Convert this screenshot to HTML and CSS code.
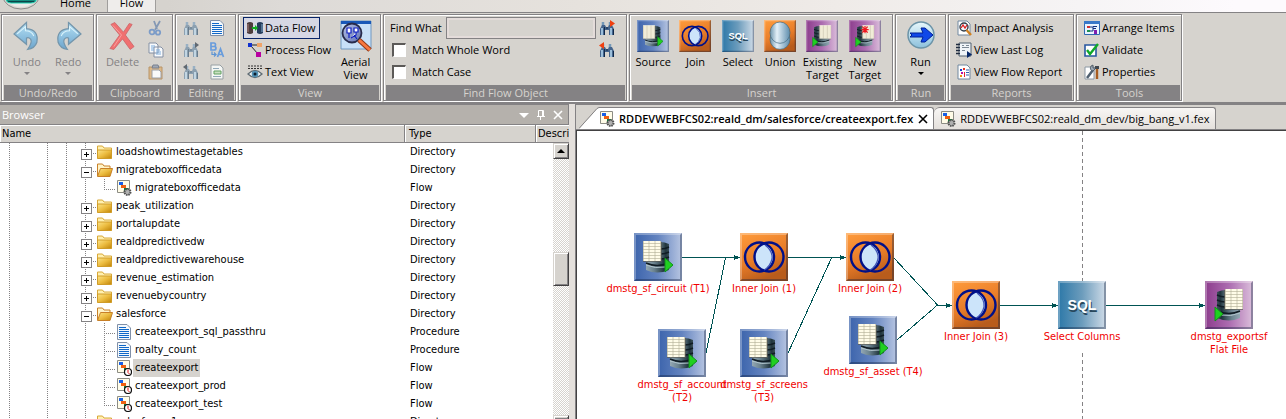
FILE: index.html
```html
<!DOCTYPE html>
<html lang="en">
<head>
<meta charset="utf-8">
<title>Data Management Console</title>
<link rel="stylesheet" href="styles.css">
</head>
<body>
<svg class="defs" aria-hidden="true">
  <defs>
    <linearGradient id="gBlue" x1="0" x2="1"><stop offset="0" stop-color="#3c64ac"/><stop offset=".5" stop-color="#6484c0"/><stop offset="1" stop-color="#b8c6e2"/></linearGradient>
    <linearGradient id="gOrange" x1="0" y1="0" x2=".4" y2="1"><stop offset="0" stop-color="#ff9c3c"/><stop offset=".6" stop-color="#e87c28"/><stop offset="1" stop-color="#b85c1c"/></linearGradient>
    <linearGradient id="gTeal" x1="0" x2="1"><stop offset="0" stop-color="#2c78a8"/><stop offset=".5" stop-color="#6c9cbc"/><stop offset="1" stop-color="#d0dce8"/></linearGradient>
    <linearGradient id="gPurple" x1="0" x2="1"><stop offset="0" stop-color="#8c3c8c"/><stop offset=".5" stop-color="#ac6cb0"/><stop offset="1" stop-color="#dcc0dc"/></linearGradient>
    <linearGradient id="gCyl" x1="0" x2="1"><stop offset="0" stop-color="#94a8b4"/><stop offset=".35" stop-color="#6c8490"/><stop offset=".8" stop-color="#20343c"/><stop offset="1" stop-color="#3c5058"/></linearGradient>
    <linearGradient id="gSilver" x1="0" x2="1"><stop offset="0" stop-color="#6c94ac"/><stop offset=".35" stop-color="#e4f0f8"/><stop offset="1" stop-color="#5c8cac"/></linearGradient>
    <linearGradient id="gArrow" x1="0" y1="0" x2="0" y2="1"><stop offset="0" stop-color="#b4e0f4"/><stop offset="1" stop-color="#6ca4cc"/></linearGradient>
    <linearGradient id="gFolder" x1="0" y1="0" x2="1" y2="1"><stop offset="0" stop-color="#fce488"/><stop offset=".5" stop-color="#ecbc40"/><stop offset="1" stop-color="#c08408"/></linearGradient>
    <linearGradient id="gRun" x1="0" y1="0" x2="0" y2="1"><stop offset="0" stop-color="#e8f8fc"/><stop offset="1" stop-color="#8cc0dc"/></linearGradient>
    <linearGradient id="gLens" x1="0" y1="0" x2="1" y2="1"><stop offset="0" stop-color="#b8c4e8"/><stop offset="1" stop-color="#6070b0"/></linearGradient>
  </defs>
  <symbol id="bevel" viewBox="0 0 48 48"><path d="M0 0H48L46 2H2V46L0 48Z" fill="#fff" opacity=".3"/><path d="M48 0V48H0L2 46H46V2Z" fill="#102040" opacity=".38"/></symbol>
  <symbol id="db" viewBox="0 0 32 34">
    <path d="M10 4Q17 0 26 4V23H10Z" fill="url(#gCyl)"/><path d="M3 18H26V30Q14 35 3 30Z" fill="url(#gCyl)"/>
    <path d="M3 23Q14 28 26 23M18 9Q22 9 26 7M18 14Q22 14 26 12M18 19Q22 19 26 17" fill="none" stroke="#101c24" stroke-width="1.4"/><path d="M3 25Q12 29 22 27" fill="none" stroke="#b0c4cc"/>
    <path d="M0 1H18V21H0Z" fill="#fffce8"/><path d="M0 3.5H18M0 6.5H18M0 9.5H18M0 12.5H18M0 15.5H18M0 18.5H18M.5 1V21M6 1V21M12 1V21M17.5 1V21" stroke="#b0ac94" stroke-width=".6"/><path d="M0 21.5H18.5V2" fill="none" stroke="#5c5c54" stroke-width=".7"/>
  </symbol>
  <symbol id="source" viewBox="0 0 48 48"><path d="M0 0H48V48H0Z" fill="url(#gBlue)"/><use href="#bevel"/><use href="#db" x="9" y="7" width="32" height="34"/><path d="M31 25L39 32L31 39Z" fill="#20d020" stroke="#10901c" stroke-width="1"/></symbol>
  <symbol id="join" viewBox="0 0 48 48"><path d="M0 0H48V48H0Z" fill="url(#gOrange)"/><use href="#bevel"/><ellipse cx="24" cy="24" rx="10" ry="13" fill="#cce4fa"/><g fill="none" stroke="#001088" stroke-width="2.4"><ellipse cx="19.5" cy="24" rx="14.5" ry="14.500"/><ellipse cx="29" cy="24" rx="14.500" ry="14.500"/></g><path d="M25 12Q33 18 32 26Q30 34 24 37" fill="none" stroke="#4054b4" stroke-width="1.2"/></symbol>
  <symbol id="sql" viewBox="0 0 48 48"><path d="M0 0H48V48H0Z" fill="url(#gTeal)"/><use href="#bevel"/><text x="25" y="31" class="sql-text sql-shade">SQL</text><text x="24" y="29" class="sql-text">SQL</text></symbol>
  <symbol id="union" viewBox="0 0 48 48"><path d="M0 0H48V48H0Z" fill="url(#gOrange)"/><use href="#bevel"/><ellipse cx="24" cy="29" rx="15" ry="15" fill="url(#gSilver)" stroke="#406880"/><ellipse cx="24" cy="19" rx="15" ry="16" fill="url(#gSilver)" stroke="#406880"/></symbol>
  <symbol id="target" viewBox="0 0 48 48"><path d="M0 0H48V48H0Z" fill="url(#gPurple)"/><use href="#bevel"/><g transform="matrix(-1 0 0 1 38 7)"><use href="#db" width="32" height="34" x="0" y="0"/></g><path d="M10 26L18 33L10 40Z" fill="#20d020" stroke="#10901c"/></symbol>
  <symbol id="newtarget" viewBox="0 0 48 48"><use href="#target" width="48" height="48"/><path d="M24 9V20M18.500 14.500H29.500M20 10L28 19M28 10L20 19" stroke="#f01820" stroke-width="1.8"/></symbol>
  <symbol id="undo" viewBox="0 0 26 28"><path d="M1 12L13 1V7Q25 8 23 20Q21 26 14 27Q19 20 17 17Q15 15 13 16V22Z" fill="url(#gArrow)" stroke="#7496ac" stroke-width="1.2"/><path d="M4 12L12 5V9Q18 9 20 14" fill="none" stroke="#dcf4fc"/></symbol>
  <symbol id="redo" viewBox="0 0 26 28"><g transform="matrix(-1 0 0 1 26 0)"><use href="#undo" width="26" height="28"/></g></symbol>
  <symbol id="delete" viewBox="0 0 28 30"><path d="M2 3L6 1L15 11L21 2L24 3L17 14L26 26L22 29L14 18L5 29L1 28L11 14Z" fill="#f07070" stroke="#c86468" stroke-width=".8"/><path d="M4 4L13 14L5 26" fill="none" stroke="#f8a0a0"/></symbol>
  <symbol id="cut" viewBox="0 0 16 16"><path d="M6 1L9 9M12 1L7 10" stroke="#8498b4" stroke-width="1.8"/><g fill="none" stroke="#7c9cc8" stroke-width="1.8"><circle cx="4" cy="12" r="2.400"/><circle cx="10" cy="12.500" r="2.200"/></g></symbol>
  <symbol id="copy" viewBox="0 0 16 16"><path d="M1 1H8L10 3V11H1ZM6 5H13L15 7V15H6Z" fill="#f8fafc" stroke="#8490a4"/><path d="M3 4H7M3 6H6M3 8H6M8 8H12M8 10H13M8 12H13" stroke="#7cacdc"/></symbol>
  <symbol id="paste" viewBox="0 0 16 16"><path d="M1 3H14V15H1Z" fill="#dcb888" stroke="#b89468"/><path d="M4 4L5 1H10L11 4Z" fill="#a0a8b4" stroke="#788090"/><path d="M4 6H11L13 8V14H4Z" fill="#fafafa" stroke="#9ca0a8"/></symbol>
  <symbol id="bino" viewBox="0 0 16 16"><path d="M4 2V6M11 2V6" stroke="#98b0c4" stroke-width="2.500"/><path d="M3 5H6L7 7H9L10 5H13L15 9V15H10V10H6V15H1V9Z" fill="#8ca0b0"/><path d="M3 8V15M12 8V15" stroke="#d4e8f4" stroke-width="1.500"/><path d="M5.500 7V15M14.500 9V15M7 8H9" stroke="#687c8c"/></symbol>
  <symbol id="bino-dark" viewBox="0 0 16 16"><path d="M4 2V6M11 2V6" stroke="#7498b8" stroke-width="2.500"/><path d="M3 5H6L7 7H9L10 5H13L15 9V15H10V10H6V15H1V9Z" fill="#44648c"/><path d="M3 8V15M12 8V15" stroke="#b8dcf4" stroke-width="1.500"/><path d="M5.500 7V15M14.500 9V15M7 8H9" stroke="#102848"/></symbol>
  <symbol id="bino-next" viewBox="0 0 16 16"><use href="#bino" width="16" height="16"/><path d="M12 0L16 3L12 6Z" fill="#606870"/></symbol>
  <symbol id="bino-prev" viewBox="0 0 16 16"><use href="#bino" width="16" height="16"/><path d="M4 0L0 3L4 6Z" fill="#606870"/></symbol>
  <symbol id="find-next" viewBox="0 0 16 16"><use href="#bino-dark" width="16" height="16"/><path d="M11 0L16 3.500L11 7Z" fill="#f04010"/></symbol>
  <symbol id="find-prev" viewBox="0 0 16 16"><use href="#bino-dark" width="16" height="16"/><path d="M5 0L0 3.500L5 7Z" fill="#f04010"/></symbol>
  <symbol id="doc" viewBox="0 0 16 16"><path d="M1.500 .5H11L14.500 4V15.500H1.500Z" fill="#f4f8fc" stroke="#8090a8"/><path d="M3 3.500H10M3 5.500H13M3 7.500H13M3 9.500H13M3 11.500H13M3 13.500H13" stroke="#1068c8"/></symbol>
  <symbol id="replace" viewBox="0 0 16 16"><path d="M2 1V8H5Q7 8 7 6Q7 4.500 5 4.500H2H5Q6.500 4.500 6.500 3Q6.500 1 5 1ZM8.500 15L11.500 7L14.500 15M9.500 12.500H13.500" fill="none" stroke="#689cdc" stroke-width="1.700"/><path d="M3 9.500V12.500H7M5 10.500L7 12.500L5 14.500" fill="none" stroke="#5c94d4" stroke-width="1.200"/></symbol>
  <symbol id="comment" viewBox="0 0 16 16"><path d="M2 1H11L14 4V15H2Z" fill="#f4f6f4" stroke="#98a0a4"/><path d="M4 4.500H10M4 12.500H12" stroke="#90a8b8"/><path d="M5 7H12V10H5Z" fill="#c8e0c0" stroke="#60a060"/></symbol>
  <symbol id="dataflow" viewBox="0 0 16 16"><path d="M0 3Q3 1 6 3V13Q3 15 0 13Z" fill="#4c3c3c"/><path d="M1 4V12" stroke="#a87c7c"/><path d="M10 3Q13 1 16 3V13Q13 15 10 13Z" fill="#243c5c"/><path d="M15 4V12" stroke="#84acd0"/><path d="M5 8H9" stroke="#10b020" stroke-width="2"/><path d="M8 5L11 8L8 11Z" fill="#10b020"/></symbol>
  <symbol id="processflow" viewBox="0 0 16 16"><path d="M4 3H11M4 4L11 12" stroke="#202020"/><path d="M1 1H5V5H1Z" fill="#1030d0"/><path d="M10 1H15V5H10Z" fill="#f0a468"/><path d="M9 10H14V15H9Z" fill="#b800a0"/></symbol>
  <symbol id="textview" viewBox="0 0 16 16"><path d="M1 2H15M1 4.500H15" stroke="#303030" stroke-dasharray="2 1"/><path d="M1 10Q8 3 15 10Q8 17 1 10Z" fill="#f4f8fa" stroke="#606c74" stroke-width="1.300"/><circle cx="8" cy="10" r="3.300" fill="#5090b4"/><circle cx="8" cy="10" r="1.500" fill="#0c1c2c"/></symbol>
  <symbol id="aerial" viewBox="0 0 32 32"><path d="M1 1H31V29H1Z" fill="#c8e0f8" stroke="#7098c0"/><path d="M1 1H31V4H1Z" fill="#1858b8"/><circle cx="12" cy="13" r="9.500" fill="url(#gLens)" stroke="#282c4c" stroke-width="1.800"/><path d="M7 8H11V13H7ZM14 8H18V12H14ZM9 13V18M16 12V15L11 18M14 15L17 19" fill="#fff" stroke="#1020c0" stroke-width="1.200"/><path d="M19 20L30 30" stroke="#903818" stroke-width="5"/><path d="M19 20L30 30" stroke="#f87840" stroke-width="3"/></symbol>
  <symbol id="run" viewBox="0 0 32 32"><circle cx="16" cy="15" r="13" fill="url(#gRun)" stroke="#6c94a8" stroke-width="1.500"/><path d="M5 13H18L16 8H20L28 15L20 22H16L18 17H5L7 15Z" fill="#1048e8" stroke="#002098"/></symbol>
  <symbol id="impact" viewBox="0 0 16 16"><path d="M2 1H11L14 4V15H2Z" fill="#fff" stroke="#7088a0"/><circle cx="8" cy="7" r="4" fill="#f0f8ff" stroke="#303c48" stroke-width="1.400"/><path d="M5 8L7 5L9 8L11 5" fill="none" stroke="#e02020" stroke-width="1.300"/><path d="M10.500 10L15 15" stroke="#d08020" stroke-width="2.400"/></symbol>
  <symbol id="log" viewBox="0 0 16 16"><path d="M3 1H15V14H3Z" fill="#f0f4f8" stroke="#506070"/><path d="M0 2.500H4M0 5.500H4M0 8.500H4M0 11.500H4" stroke="#202c40" stroke-width="1.300"/><path d="M6 3.500H8M10 3.500H13M6 5.500H13M6 8.500H9" stroke="#7c8894"/><path d="M11 9L16 12.500L11 16Z" fill="#082868"/></symbol>
  <symbol id="report" viewBox="0 0 16 16"><path d="M2 1H11L14 4V15H2Z" fill="#fff" stroke="#7088a0"/><path d="M4 5H6V7H4Z" fill="#1040d0"/><path d="M7 4H9V6H7Z" fill="#e03020"/><path d="M5 8H7V10H5Z" fill="#c010a0"/><path d="M4 11H6V13H4Z" fill="#f09010"/><path d="M8 8H9V13H8Z" fill="#e02040"/><path d="M10 6H13M10 8.500H13M10 11H13" stroke="#3060b0" stroke-width="1.200"/></symbol>
  <symbol id="arrange" viewBox="0 0 16 16"><path d="M.5 1.500H15.500V14.500H.5Z" fill="#e8f4ff" stroke="#3068b0"/><path d="M0 1H16V4H0Z" fill="#3878c8"/><path d="M3 6H6V8H3Z" fill="#d03030"/><path d="M3 10H6V12H3Z" fill="#209050"/><path d="M6 7H9V11H6M9 6.500H13M9 8.500H12" fill="none" stroke="#103080"/><path d="M10 10H13V14H10Z" fill="#8020b0"/></symbol>
  <symbol id="validate" viewBox="0 0 16 16"><path d="M1 3H12V14H1Z" fill="#fff" stroke="#2858a0" stroke-width="1.600"/><path d="M3 8L6 12L14 2" fill="none" stroke="#10a828" stroke-width="2.400"/></symbol>
  <symbol id="props" viewBox="0 0 16 16"><path d="M1 3H10V15H1Z" fill="#fff" stroke="#8c98a4"/><path d="M3 14L9 6" stroke="#506070" stroke-width="2.500"/><path d="M7 2Q5 6 9 7L12 4L9 4L9 1Z" fill="#9ca8b4" stroke="#404c58" stroke-width=".8"/><path d="M11 2H15V5H11Z" fill="#404850"/><path d="M13 5V15" stroke="#a85c20" stroke-width="2.400"/></symbol>
  <symbol id="folder" viewBox="0 0 16 16"><path d="M.5 14V2H5.500L7 4H14.500V14Z" fill="#fff0b0" stroke="#d8a838"/><path d="M.5 6H14.500V14.500H.5Z" fill="url(#gFolder)" stroke="#d09c28"/></symbol>
  <symbol id="folder-open" viewBox="0 0 16 16"><path d="M.5 14V2H5.500L7 4H13V7" fill="#fff4c8" stroke="#c88028"/><path d="M.5 14.500L3.500 6.500H15.500L13 14.500Z" fill="url(#gFolder)" stroke="#c88028"/></symbol>
  <symbol id="flow" viewBox="0 0 16 16"><path d="M1.500 .5H13.500V12.500H1.500Z" fill="#fffce8" stroke="#8c8c84"/><path d="M3 2H7V5H3Z" fill="#1860e8"/><path d="M5 5H10V8H5Z" fill="#f06010"/><path d="M8 8H12V11H8Z" fill="#10803c"/></symbol>
  <symbol id="flow-gear" viewBox="0 0 16 16"><use href="#flow" width="16" height="16"/><circle cx="11.500" cy="12" r="3" fill="#b0b0b0" stroke="#505050" stroke-width="2" stroke-dasharray="1.500 .8"/></symbol>
  <symbol id="flow-clock" viewBox="0 0 16 16"><use href="#flow" width="16" height="16"/><circle cx="12" cy="12" r="3.500" fill="#fff" stroke="#101010" stroke-width="1.200"/><path d="M12 9.500V12.500L13.500 14" fill="none" stroke="#e01010"/></symbol>
</svg>

<div class="app">
  <header class="tabbar">
    <svg class="orb" viewBox="0 0 40 12"><ellipse cx="21" cy="-4" rx="18" ry="13" fill="#dcdad6" stroke="#8c8a88"/><ellipse cx="21" cy="-5" rx="16" ry="12" fill="#eceae8"/><path d="M6 0H36V1Q34 3 31 3H11Q7 3 6 0Z" fill="#0c4448" stroke="#20d8b8"/></svg>
    <nav class="tabs"><button class="tab">Home</button><button class="tab tab-on">Flow</button></nav>
  </header>

  <div class="ribbon">
    <section class="group g-undo">
      <div class="body">
        <button class="big off"><svg class="ic-big"><use href="#undo"/></svg>Undo<i class="drop"></i></button>
        <button class="big off"><svg class="ic-big"><use href="#redo"/></svg>Redo<i class="drop"></i></button>
      </div>
      <h2>Undo/Redo</h2>
    </section>
    <section class="group g-clip">
      <div class="body">
        <button class="big off"><svg class="ic-big"><use href="#delete"/></svg>Delete</button>
        <div class="stack">
          <button class="row" aria-label="Cut"><svg><use href="#cut"/></svg></button>
          <button class="row" aria-label="Copy"><svg><use href="#copy"/></svg></button>
          <button class="row" aria-label="Paste"><svg><use href="#paste"/></svg></button>
        </div>
      </div>
      <h2>Clipboard</h2>
    </section>
    <section class="group g-edit">
      <div class="body">
        <div class="stack">
          <button class="row" aria-label="Find"><svg><use href="#bino"/></svg></button>
          <button class="row" aria-label="Find next"><svg><use href="#bino-next"/></svg></button>
          <button class="row" aria-label="Find previous"><svg><use href="#bino-prev"/></svg></button>
        </div>
        <div class="stack">
          <button class="row" aria-label="Select all"><svg><use href="#doc"/></svg></button>
          <button class="row" aria-label="Replace"><svg><use href="#replace"/></svg></button>
          <button class="row" aria-label="Comment"><svg><use href="#comment"/></svg></button>
        </div>
      </div>
      <h2>Editing</h2>
    </section>
    <section class="group g-view">
      <div class="body">
        <div class="stack">
          <button class="row row-on"><svg><use href="#dataflow"/></svg>Data Flow</button>
          <button class="row"><svg><use href="#processflow"/></svg>Process Flow</button>
          <button class="row"><svg><use href="#textview"/></svg>Text View</button>
        </div>
        <button class="big"><svg class="ic-32"><use href="#aerial"/></svg><span>Aerial<br>View</span></button>
      </div>
      <h2>View</h2>
    </section>
    <section class="group g-find">
      <div class="body">
        <div class="stack grow">
          <div class="row field"><label for="what">Find What</label><input id="what" class="what" type="text"></div>
          <label class="row check"><input type="checkbox">Match Whole Word</label>
          <label class="row check"><input type="checkbox">Match Case</label>
        </div>
        <div class="stack">
          <button class="row" aria-label="Find next object"><svg><use href="#find-next"/></svg></button>
          <button class="row" aria-label="Find previous object"><svg><use href="#find-prev"/></svg></button>
        </div>
      </div>
      <h2>Find Flow Object</h2>
    </section>
    <section class="group g-insert">
      <div class="body">
        <button class="big"><svg class="ic-32"><use href="#source"/></svg>Source</button>
        <button class="big"><svg class="ic-32"><use href="#join"/></svg>Join</button>
        <button class="big"><svg class="ic-32"><use href="#sql"/></svg>Select</button>
        <button class="big"><svg class="ic-32"><use href="#union"/></svg>Union</button>
        <button class="big"><svg class="ic-32"><use href="#target"/></svg><span>Existing<br>Target</span></button>
        <button class="big"><svg class="ic-32"><use href="#newtarget"/></svg><span>New<br>Target</span></button>
      </div>
      <h2>Insert</h2>
    </section>
    <section class="group g-run">
      <div class="body"><button class="big"><svg class="ic-32"><use href="#run"/></svg>Run<i class="drop"></i></button></div>
      <h2>Run</h2>
    </section>
    <section class="group g-reports">
      <div class="body"><div class="stack">
        <button class="row"><svg><use href="#impact"/></svg>Impact Analysis</button>
        <button class="row"><svg><use href="#log"/></svg>View Last Log</button>
        <button class="row"><svg><use href="#report"/></svg>View Flow Report</button>
      </div></div>
      <h2>Reports</h2>
    </section>
    <section class="group g-tools">
      <div class="body"><div class="stack">
        <button class="row"><svg><use href="#arrange"/></svg>Arrange Items</button>
        <button class="row"><svg><use href="#validate"/></svg>Validate</button>
        <button class="row"><svg><use href="#props"/></svg>Properties</button>
      </div></div>
      <h2>Tools</h2>
    </section>
  </div>

  <main class="work">
    <section class="browser">
      <div class="caption"><span>Browser</span>
        <button aria-label="Menu"><svg viewBox="0 0 12 12"><path d="M1 4H11L6 9Z" fill="#fff"/></svg></button>
        <button aria-label="Pin"><svg viewBox="0 0 12 12"><path d="M3.500 7V1.500H8.500V7M7.500 2V7M2 7.500H10M5.500 8V11" fill="none" stroke="#fff"/></svg></button>
        <button aria-label="Close"><svg viewBox="0 0 12 12"><path d="M2 2L10 10M10 2L2 10" stroke="#fff" stroke-width="1.600"/></svg></button>
      </div>
      <div class="list">
        <table class="tree">
          <colgroup><col class="c-name"><col class="c-type"><col></colgroup>
          <thead><tr><th>Name</th><th>Type</th><th>Descri</th></tr></thead>
          <tbody>
            <tr><td><div class="node"><i class="g v"></i><i class="g"></i><i class="g v"></i><i class="g v"></i><i class="g v x plus"></i><svg><use href="#folder"/></svg><span>loadshowtimestagetables</span></div></td><td>Directory</td><td></td></tr>
            <tr><td><div class="node"><i class="g v"></i><i class="g"></i><i class="g v"></i><i class="g v"></i><i class="g v x"></i><svg><use href="#folder-open"/></svg><span>migrateboxofficedata</span></div></td><td>Directory</td><td></td></tr>
            <tr><td><div class="node"><i class="g v"></i><i class="g"></i><i class="g v"></i><i class="g v"></i><i class="g v"></i><i class="g v h last"></i><svg><use href="#flow-gear"/></svg><span>migrateboxofficedata</span></div></td><td>Flow</td><td></td></tr>
            <tr><td><div class="node"><i class="g v"></i><i class="g"></i><i class="g v"></i><i class="g v"></i><i class="g v x plus"></i><svg><use href="#folder"/></svg><span>peak_utilization</span></div></td><td>Directory</td><td></td></tr>
            <tr><td><div class="node"><i class="g v"></i><i class="g"></i><i class="g v"></i><i class="g v"></i><i class="g v x plus"></i><svg><use href="#folder"/></svg><span>portalupdate</span></div></td><td>Directory</td><td></td></tr>
            <tr><td><div class="node"><i class="g v"></i><i class="g"></i><i class="g v"></i><i class="g v"></i><i class="g v x plus"></i><svg><use href="#folder"/></svg><span>realdpredictivedw</span></div></td><td>Directory</td><td></td></tr>
            <tr><td><div class="node"><i class="g v"></i><i class="g"></i><i class="g v"></i><i class="g v"></i><i class="g v x plus"></i><svg><use href="#folder"/></svg><span>realdpredictivewarehouse</span></div></td><td>Directory</td><td></td></tr>
            <tr><td><div class="node"><i class="g v"></i><i class="g"></i><i class="g v"></i><i class="g v"></i><i class="g v x plus"></i><svg><use href="#folder"/></svg><span>revenue_estimation</span></div></td><td>Directory</td><td></td></tr>
            <tr><td><div class="node"><i class="g v"></i><i class="g"></i><i class="g v"></i><i class="g v"></i><i class="g v x plus"></i><svg><use href="#folder"/></svg><span>revenuebycountry</span></div></td><td>Directory</td><td></td></tr>
            <tr><td><div class="node"><i class="g v"></i><i class="g"></i><i class="g v"></i><i class="g v"></i><i class="g v x"></i><svg><use href="#folder-open"/></svg><span>salesforce</span></div></td><td>Directory</td><td></td></tr>
            <tr><td><div class="node"><i class="g v"></i><i class="g"></i><i class="g v"></i><i class="g v"></i><i class="g v"></i><i class="g v h"></i><svg><use href="#doc"/></svg><span>createexport_sql_passthru</span></div></td><td>Procedure</td><td></td></tr>
            <tr><td><div class="node"><i class="g v"></i><i class="g"></i><i class="g v"></i><i class="g v"></i><i class="g v"></i><i class="g v h"></i><svg><use href="#doc"/></svg><span>roalty_count</span></div></td><td>Procedure</td><td></td></tr>
            <tr><td><div class="node"><i class="g v"></i><i class="g"></i><i class="g v"></i><i class="g v"></i><i class="g v"></i><i class="g v h"></i><svg><use href="#flow-clock"/></svg><span class="sel">createexport</span></div></td><td>Flow</td><td></td></tr>
            <tr><td><div class="node"><i class="g v"></i><i class="g"></i><i class="g v"></i><i class="g v"></i><i class="g v"></i><i class="g v h"></i><svg><use href="#flow-clock"/></svg><span>createexport_prod</span></div></td><td>Flow</td><td></td></tr>
            <tr><td><div class="node"><i class="g v"></i><i class="g"></i><i class="g v"></i><i class="g v"></i><i class="g v"></i><i class="g v h last"></i><svg><use href="#flow-clock"/></svg><span>createexport_test</span></div></td><td>Flow</td><td></td></tr>
            <tr><td><div class="node"><i class="g v"></i><i class="g"></i><i class="g v"></i><i class="g v"></i><i class="g v x plus"></i><svg><use href="#folder"/></svg><span>salesforce_1</span></div></td><td>Directory</td><td></td></tr>
          </tbody>
        </table>
        <div class="scroll">
          <button class="raised arrow" aria-label="Scroll up"></button>
          <div class="space-a"></div>
          <div class="raised thumb"></div>
          <div class="space-b"></div>
          <button class="raised corner" aria-label="Scroll down"></button>
        </div>
      </div>
    </section>

    <section class="editor">
      <div class="docs">
        <svg class="slant" viewBox="0 0 20 22"><path d="M0 22L19 1H20V22Z" fill="#fff"/><path d="M0 21.500L18 1.500L20 .5" fill="none" stroke="#848284"/></svg>
        <div class="doc doc-on"><svg class="ic"><use href="#flow-gear"/></svg><a href="#a">RDDEVWEBFCS02:reald_dm/salesforce/createexport.fex</a><button aria-label="Close tab"><svg viewBox="0 0 12 12"><path d="M2 2L10 10M10 2L2 10" stroke="#000" stroke-width="1.600"/></svg></button></div>
        <div class="doc"><svg class="ic"><use href="#flow-gear"/></svg><a href="#b">RDDEVWEBFCS02:reald_dm_dev/big_bang_v1.fex</a></div>
      </div>
      <div class="canvas">
        <svg class="wires" width="710" height="290" viewBox="577 131 710 290">
          <path d="M1082.500 131V281M1082.500 353V421" stroke="#848284" stroke-dasharray="4 3" fill="none"/>
          <g fill="none" stroke="#005454">
            <path d="M681 257.500H736M787 257.500H842M938 305.500H948M1000 305.500H1054M1106 305.500H1201M706 353L725.500 258M788 353L831.500 258M894 258L937.500 305L897 340"/>
          </g>
          <path d="M734 255L740 257.500L734 260ZM840 255L846 257.500L840 260ZM946 303L952 305.500L946 308ZM1052 303L1058 305.500L1052 308ZM1199 303L1205 305.500L1199 308Z" fill="#005454"/>
        </svg>
        <figure class="item" style="left:57px;top:102px"><svg><use href="#source"/></svg><figcaption>dmstg_sf_circuit (T1)</figcaption></figure>
        <figure class="item" style="left:163px;top:102px"><svg><use href="#join"/></svg><figcaption>Inner Join (1)</figcaption></figure>
        <figure class="item" style="left:269px;top:102px"><svg><use href="#join"/></svg><figcaption>Inner Join (2)</figcaption></figure>
        <figure class="item" style="left:81px;top:198px"><svg><use href="#source"/></svg><figcaption>dmstg_sf_account<br>(T2)</figcaption></figure>
        <figure class="item" style="left:163px;top:198px"><svg><use href="#source"/></svg><figcaption>dmstg_sf_screens<br>(T3)</figcaption></figure>
        <figure class="item" style="left:272px;top:185px"><svg><use href="#source"/></svg><figcaption>dmstg_sf_asset (T4)</figcaption></figure>
        <figure class="item" style="left:375px;top:150px"><svg><use href="#join"/></svg><figcaption>Inner Join (3)</figcaption></figure>
        <figure class="item" style="left:481px;top:150px"><svg><use href="#sql"/></svg><figcaption>Select Columns</figcaption></figure>
        <figure class="item" style="left:628px;top:150px"><svg><use href="#target"/></svg><figcaption>dmstg_exportsf<br>Flat File</figcaption></figure>
      </div>
    </section>
  </main>
</div>
</body>
</html>
```
FILE: styles.css
```css
* { box-sizing: border-box; }
html, body { height: 100%; margin: 0; overflow: hidden; }
body { background: #d6d3ce; color: #000; font: 11px/13px "Open Sans", "Noto Sans", sans-serif; }
button { margin: 0; padding: 0; border: 0; background: none; color: inherit; font: inherit; }
svg { display: block; flex: none; }
.defs { position: absolute; width: 0; height: 0; }
.sql-text { font: bold 14px "Liberation Sans", sans-serif; fill: #fff; text-anchor: middle; }
.sql-shade { fill: #28485c; }

.app { display: flex; flex-direction: column; height: 100vh; }

/* Tab bar */
.tabbar { display: flex; flex: none; height: 13px; overflow: hidden; border-bottom: 1px solid #848284; background: linear-gradient(90deg, #d6d3ce 13%, #dddad7 22%, #e6e2dd 45%, #efebe8 65%, #f6f4f5 84%, #fdfafd 96%); }
.orb { width: 40px; height: 12px; }
.tabs { display: flex; align-items: flex-end; padding-left: 4px; }
.tab { width: 49px; padding: 0 0 3px; line-height: 13px; }
.tab:first-child { width: 63px; }
.tab-on { border: solid #a09e9c; border-width: 0 1px; background: #efedeb; }

/* Ribbon */
.ribbon { display: flex; flex: none; gap: 2px; padding: 1px 1px 1px; border-bottom: 2px solid #848284; }
.group { display: flex; flex-direction: column; border: 1px solid #848284; box-shadow: inset 1px 1px #fff, 1px 1px #fff; }
.group h2 { margin: 0 1px 0 2px; background: #848284; color: #d6d3ce; font-size: 11px; font-weight: normal; line-height: 15px; text-align: center; }
.body { display: flex; height: 70px; padding: 2px 4px 0; }
.big { display: flex; flex: 1; flex-direction: column; align-items: center; justify-content: flex-start; padding-top: 3px; white-space: nowrap; text-align: center; }
.big svg { margin: 0 auto 3px; }
.ic-32 { width: 32px; height: 32px; }
.ic-big { width: 27px; height: 32px; }
.off { color: #848284; }
.drop { width: 0; margin: 4px auto 0; border: solid transparent; border-width: 3px 3px 0; border-top-color: currentColor; }
.stack { display: flex; flex-direction: column; align-items: flex-start; }
.grow { flex: 1; min-width: 0; align-items: stretch; }
.row { display: flex; align-items: center; gap: 2px; flex: none; height: 22px; padding: 0 4px; line-height: 20px; white-space: nowrap; }
.row svg { width: 16px; height: 16px; }
.row-on { border: 1px solid #082468; padding: 0 3px; background: #d6d7e4; }
.g-undo { width: 93px; }
.g-clip { width: 77px; }
.g-edit { width: 61px; }
.g-edit .body { gap: 2px; padding: 2px 3px 0; }
.g-view { width: 143px; }
.g-find { width: 244px; }
.g-insert { width: 264px; }
.g-insert .body { padding: 2px 6px 0 2px; }
.g-run { width: 51px; }
.g-reports { width: 126px; }
.g-reports .body, .g-tools .body { padding: 2px 3px 0; }
.g-tools { width: 106px; }
.what { flex: 1; min-width: 0; height: 22px; border: 1px solid #848284; background: #d6d3ce; box-shadow: inset 0 0 0 2px #e4dcda; }
.g-find .body { padding: 2px 8px 0 2px; }
.g-find .stack:last-child .row { padding: 0 3px; }
.field { gap: 4px; padding-right: 0; }
.check { gap: 6px; }
.check input { appearance: none; width: 14px; height: 14px; margin: 0 0 0 2px; border: solid; border-width: 2px 1px 1px 2px; border-color: #5c5a58 #fff #fff #5c5a58; background: #fff; }

/* Work area */
.work { display: grid; flex: 1; grid-template-columns: 44.25% minmax(0, 1fr); gap: 6px; min-height: 0; background: #e4e0dc; }
.browser { display: flex; flex-direction: column; min-width: 0; min-height: 0; border-top: 1px solid #848284; }
.caption { display: flex; align-items: center; gap: 5px; flex: none; height: 20px; padding: 0 4px 0 2px; border-right: 1px solid #848284; border-bottom: 1px solid #848284; background: #b5b1ac; color: #fff; }
.caption span { flex: 1; }
.caption svg { width: 12px; height: 12px; }
.list { position: relative; flex: 1; min-height: 0; overflow: hidden; background: #fff; font: 11px/16px "DejaVu Sans Condensed", "DejaVu Sans", sans-serif; }
.tree { width: 100%; border-collapse: separate; border-spacing: 0; table-layout: fixed; }
.c-name { width: 405px; }
.c-type { width: 131px; }
.tree th { height: 18px; padding: 0 0 0 4px; overflow: hidden; border-right: 1px solid #848284; border-bottom: 1px solid #848284; background: #d6d3ce; box-shadow: inset 1px 1px #fff; font-weight: normal; text-align: left; white-space: nowrap; }
.tree th:first-child { padding-left: 2px; }
.tree th:last-child { padding-left: 2px; border-right: 0; }
.tree td { height: 18px; padding: 0 0 0 5px; }
.tree td:first-child { padding: 0; }
.node { display: flex; align-items: center; height: 18px; }
.node svg { width: 16px; height: 16px; margin: 0 1px 0 2px; }
.node span { padding: 0 2px; line-height: 18px; }
.node .sel { background: #d6d3ce; }
.g { position: relative; flex: none; width: 19px; height: 18px; }
.v { background: repeating-linear-gradient(#848284 0 1px, transparent 1px 2px) 9px 0 / 1px 100% no-repeat; }
.x::before, .h::before { content: ""; position: absolute; top: 10px; left: 9px; width: 12px; height: 1px; background: repeating-linear-gradient(90deg, #848284 0 1px, transparent 1px 2px); }
.x::after { content: ""; position: absolute; top: 6px; left: 5px; width: 9px; height: 9px; border: 1px solid #848284; background: linear-gradient(#000, #000) center / 5px 1px no-repeat, #fff; }
.plus::after { background: linear-gradient(#000, #000) center / 5px 1px no-repeat, linear-gradient(#000, #000) center / 1px 5px no-repeat, #fff; }
.last { background-size: 1px 11px; }
.scroll { position: absolute; top: 18px; right: 0; bottom: 0; display: flex; flex-direction: column; width: 16px; background: repeating-conic-gradient(#d6d3ce 0 25%, #fff 0 50%) 0 0 / 2px 2px; }
.raised { flex: none; border: 1px solid; border-color: #d6d3ce #424142 #424142 #d6d3ce; background: #d6d3ce; box-shadow: inset 1px 1px #fff, inset -1px -1px #848284; }
.arrow { display: grid; place-items: center; height: 16px; }
.arrow::before { content: ""; border: solid transparent; border-width: 0 4px 4px; border-bottom-color: #000; }
.space-a { flex: 93; }
.thumb { height: 34px; }
.space-b { flex: 129; }
.corner { height: 4px; border-bottom: 0; }

/* Documents */
.editor { display: flex; flex-direction: column; min-width: 0; min-height: 0; border-top: 1px solid #848284; border-left: 1px solid #848284; }
.docs { display: flex; flex: none; height: 25px; padding: 2px 0 0 3px; background: #d6d3ce; border-bottom: 1px solid #848284; }
.slant { width: 20px; height: 22px; }
.doc { display: flex; align-items: center; gap: 4px; padding: 0 6px; border: 1px solid #848284; border-bottom: 0; border-left: 0; border-radius: 6px 3px 0 0; background: linear-gradient(#f8f6f4, #e4e0dc); white-space: nowrap; }
.doc a { color: #000; text-decoration: none; }
.doc .ic { width: 16px; height: 16px; }
.doc-on { padding: 0 4px 0 0; border-radius: 0 3px 0 0; background: #fff; font-weight: 600; }
.doc button svg { width: 12px; height: 12px; }
.canvas { position: relative; flex: 1; min-height: 0; overflow: hidden; border: solid #424142; border-width: 1px 0 0 1px; background: #fff; }
.wires { position: absolute; top: 0; left: 0; shape-rendering: crispEdges; }
.item { position: absolute; display: flex; flex-direction: column; align-items: center; gap: 1px; width: 48px; margin: 0; color: #f00000; font: 11px/13px "DejaVu Sans Condensed", "DejaVu Sans", sans-serif; text-align: center; white-space: nowrap; }
.item svg { width: 48px; height: 48px; }
```
